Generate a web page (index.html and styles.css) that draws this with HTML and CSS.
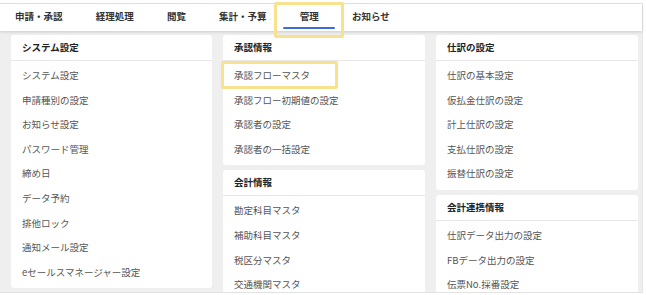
FILE: index.html
```html
<!DOCTYPE html>
<html>
<head>
  <title>管理メニュー</title>
  <link rel="stylesheet" href="styles.css">
</head>

<body>
  <div class="app">
    <div class="tabs">
      <div class="tab">申請・承認</div>
      <div class="tab">経理処理</div>
      <div class="tab">閲覧</div>
      <div class="tab">集計・予算</div>
      <div class="tab active">管理</div>
      <div class="tab">お知らせ</div>
    </div>

    <div class="panel">
      <div class="column">
        <div class="card">
          <div class="card-title">システム設定</div>
          <ul class="items">
            <li>システム設定</li>
            <li>申請種別の設定</li>
            <li>お知らせ設定</li>
            <li>パスワード管理</li>
            <li>締め日</li>
            <li>データ予約</li>
            <li>排他ロック</li>
            <li>通知メール設定</li>
            <li>eセールスマネージャー設定</li>
          </ul>
        </div>
      </div>

      <div class="column">
        <div class="card">
          <div class="card-title">承認情報</div>
          <ul class="items">
            <li>承認フローマスタ</li>
            <li>承認フロー初期値の設定</li>
            <li>承認者の設定</li>
            <li>承認者の一括設定</li>
          </ul>
        </div>
        <div class="card">
          <div class="card-title">会計情報</div>
          <ul class="items">
            <li>勘定科目マスタ</li>
            <li>補助科目マスタ</li>
            <li>税区分マスタ</li>
            <li>交通機関マスタ</li>
          </ul>
        </div>
      </div>

      <div class="column">
        <div class="card">
          <div class="card-title">仕訳の設定</div>
          <ul class="items">
            <li>仕訳の基本設定</li>
            <li>仮払金仕訳の設定</li>
            <li>計上仕訳の設定</li>
            <li>支払仕訳の設定</li>
            <li>振替仕訳の設定</li>
          </ul>
        </div>
        <div class="card">
          <div class="card-title">会計連携情報</div>
          <ul class="items">
            <li>仕訳データ出力の設定</li>
            <li>FBデータ出力の設定</li>
            <li>伝票No.採番設定</li>
          </ul>
        </div>
      </div>
    </div>

    <!-- highlight frames -->
    <div class="mark mark-tab"></div>
    <div class="mark mark-item"></div>
  </div>
</body>
</html>
```

FILE: styles.css
```css
body {
  margin: 0;
  font-family: "Noto Sans CJK JP", "Noto Sans", sans-serif;
  font-size: 9.5px;
  color: #333;
  background: #fff;
}
.app {
  position: relative;
  width: 642px;
  margin-top: 3px;
  border-top: 1px solid #e4e4e4;
  border-right: 1px solid #e4e4e4;
}
.tabs {
  display: flex;
  height: 27px;
  background: #fff;
  box-shadow: 0 1px 3px rgba(0, 0, 0, 0.15);
  position: relative;
  z-index: 1;
}
.tab {
  position: relative;
  padding: 0 16.6px;
  line-height: 25px;
  font-weight: bold;
  color: #333;
}
.tab:first-child {
  padding-left: 15px;
}
.tab.active::after {
  content: "";
  position: absolute;
  left: 0;
  right: 0;
  bottom: 2px;
  height: 2px;
  background: #3a6fd9;
  border-radius: 1px;
}
.panel {
  display: grid;
  grid-template-columns: 201px 202px 202px;
  column-gap: 11px;
  align-items: start;
  height: 253px;
  padding: 4px 5px 4px 11px;
  background: #efefef;
  border-bottom: 1px solid #e2e2e2;
  overflow: hidden;
}
.column {
  display: flex;
  flex-direction: column;
  gap: 5px;
}
.card {
  background: #fff;
  border-radius: 3px;
}
.card-title {
  height: 25px;
  line-height: 25px;
  padding-left: 11px;
  font-weight: bold;
  color: #222;
  border-bottom: 1px solid #e8e8e8;
}
.items {
  list-style: none;
  margin: 0;
  padding: 2px 0 4px;
}
.items li {
  height: 24.6px;
  line-height: 24.6px;
  padding-left: 11px;
  color: #555;
}
.mark {
  position: absolute;
  border: 3px solid #f9e28f;
  border-radius: 2px;
  z-index: 2;
  pointer-events: none;
}
.mark-tab {
  left: 274px;
  top: -2px;
  width: 64px;
  height: 30px;
}
.mark-item {
  left: 221px;
  top: 57px;
  width: 111px;
  height: 22px;
}
```
